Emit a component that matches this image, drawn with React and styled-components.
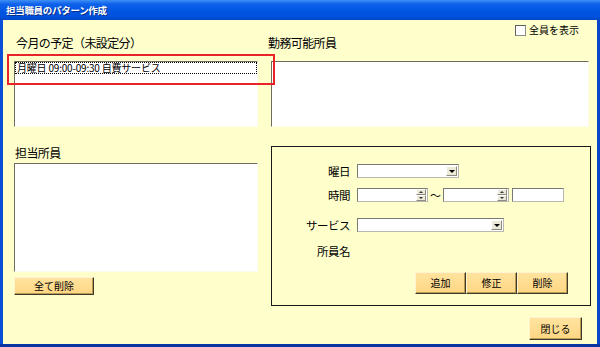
import styled, { createGlobalStyle } from 'styled-components';

const GlobalStyle = createGlobalStyle`
  html, body {
    margin: 0;
    padding: 0;
    background: #ffffff;
  }
  body {
    font-family: "Noto Sans CJK JP", "Liberation Sans", sans-serif;
    color: #000;
  }
`;

const Window = styled.div`
  width: 600px;
  height: 347px;
  box-sizing: border-box;
  display: flex;
  flex-direction: column;
  background: linear-gradient(to right, #0a4fd8, #0a55e6 50%, #0848c8);
  border-bottom: 3px solid #0a35a0;
`;

const TitleBar = styled.div`
  height: 20px;
  flex: none;
  display: flex;
  align-items: center;
  padding-left: 6px;
  background: linear-gradient(to bottom, #3d8ff6 0%, #0f62ea 20%, #0055e3 55%, #0050dc 85%, #0043c6 100%);
  color: #fff;
  font-size: 9.5px;
  font-weight: bold;
  letter-spacing: -0.3px;
  text-shadow: 1px 1px 0 #0a2f86;
`;

const Body = styled.div`
  flex: 1;
  margin: 0 3px;
  background: #ffffcc;
  padding: 0 6px 0 11px;
  display: flex;
  flex-direction: column;
`;

const CheckRow = styled.div`
  height: 12px;
  margin-top: 4px;
  display: flex;
  justify-content: flex-end;
  align-items: center;
  gap: 3px;
  padding-right: 12px;
  font-size: 10px;
  line-height: 12px;
`;

const CheckBox = styled.span`
  width: 9px;
  height: 9px;
  background: #fff;
  border: 1px solid #8a8a8a;
  border-top-color: #5f5f5f;
  border-left-color: #5f5f5f;
`;

const Columns = styled.div`
  display: grid;
  grid-template-columns: 244px 320px;
  column-gap: 13px;
  margin-top: ${(p) => p.$top || 0}px;
`;

const Column = styled.div`
  display: flex;
  flex-direction: column;
  align-items: flex-start;
`;

const Label = styled.div`
  font-size: 12px;
  line-height: 14px;
  height: ${(p) => p.$h}px;
  margin-left: ${(p) => p.$shift || 0}px;
  letter-spacing: -0.6px;
  white-space: nowrap;
`;

const ListBox = styled.div`
  width: ${(p) => p.$w}px;
  height: ${(p) => p.$h}px;
  box-sizing: border-box;
  background: #fff;
  border: 1px solid #fbfbf0;
  border-top-color: #6f6d60;
  border-left-color: #6f6d60;
`;

const ListItem = styled.div`
  height: 12px;
  box-sizing: border-box;
  border: 1px dotted #000;
  font-size: 10px;
  line-height: 10px;
  padding-left: 1px;
  white-space: nowrap;
  letter-spacing: -0.2px;
`;

const Highlight = styled.div`
  position: relative;
`;

const RedFrame = styled.div`
  position: absolute;
  left: -7px;
  top: -7px;
  width: 268px;
  height: 31px;
  box-sizing: border-box;
  border: 2px solid #e8242a;
  pointer-events: none;
`;

const Button = styled.button`
  width: ${(p) => p.$w}px;
  height: ${(p) => p.$h}px;
  margin-top: ${(p) => p.$top || 0}px;
  padding: 0;
  box-sizing: border-box;
  font-family: inherit;
  font-size: 10px;
  line-height: 10px;
  color: #000;
  background: linear-gradient(to bottom, #ffe39e, #ffd683);
  border: 1px solid #3e3a2a;
  border-top-color: #fff4cf;
  border-left-color: #fff4cf;
  box-shadow: inset -1px -1px 0 #b89a55;
`;

const GroupBox = styled.div`
  width: 320px;
  height: 160px;
  box-sizing: border-box;
  border: 1px solid #1a1a1a;
  display: flex;
  flex-direction: column;
  padding-top: 17px;
`;

const FormRow = styled.div`
  display: grid;
  grid-template-columns: 78px auto;
  column-gap: 7px;
  align-items: center;
  height: 14px;
  margin-top: ${(p) => p.$top || 0}px;
`;

const FormLabel = styled.div`
  text-align: right;
  font-size: 11.5px;
  line-height: 14px;
  letter-spacing: -0.5px;
  white-space: nowrap;
`;

const Fields = styled.div`
  display: flex;
  align-items: center;
  height: 14px;
`;

const Field = styled.div`
  width: ${(p) => p.$w}px;
  height: 14px;
  margin-left: ${(p) => p.$gap || 0}px;
  box-sizing: border-box;
  background: #fff;
  border: 1px solid #b8b8b0;
  border-top-color: #7a7a72;
  border-left-color: #7a7a72;
  display: flex;
  justify-content: flex-end;
  align-items: stretch;
`;

const DropArrow = styled.span`
  width: 11px;
  margin: 1px;
  background: #ece9d8;
  border: 1px solid #fff;
  border-right-color: #8d8b80;
  border-bottom-color: #8d8b80;
  box-sizing: border-box;
  display: flex;
  align-items: center;
  justify-content: center;
  &::after {
    content: '';
    border-left: 3px solid transparent;
    border-right: 3px solid transparent;
    border-top: 3px solid #000;
  }
`;

const Spinner = styled.span`
  width: 10px;
  margin: 0 1px 0 0;
  display: flex;
  flex-direction: column;
`;

const SpinHalf = styled.span`
  flex: 1;
  background: #ece9d8;
  border: 1px solid #fff;
  border-right-color: #8d8b80;
  border-bottom-color: #8d8b80;
  display: flex;
  align-items: center;
  justify-content: center;
  &::after {
    content: '';
    border-left: 2px solid transparent;
    border-right: 2px solid transparent;
    ${(p) => (p.$up ? 'border-bottom: 2px solid #333;' : 'border-top: 2px solid #333;')}
  }
`;

const Tilde = styled.span`
  width: 15px;
  text-align: center;
  font-size: 11px;
  line-height: 14px;
`;

const ButtonRow = styled.div`
  display: flex;
  justify-content: flex-end;
  padding-right: 22px;
  margin-top: 14px;
`;

const Footer = styled.div`
  display: flex;
  justify-content: flex-end;
  padding-right: 9px;
`;

function Select({ w }) {
  return (
    <Field $w={w}>
      <DropArrow />
    </Field>
  );
}

function SpinInput({ w, gap }) {
  return (
    <Field $w={w} $gap={gap}>
      <Spinner>
        <SpinHalf $up />
        <SpinHalf />
      </Spinner>
    </Field>
  );
}

export default function App() {
  return (
    <>
      <GlobalStyle />
      <Window>
        <TitleBar>担当職員のパターン作成</TitleBar>
        <Body>
          <CheckRow>
            <CheckBox />
            <span>全員を表示</span>
          </CheckRow>

          <Columns>
            <Column>
              <Label $h={25} $shift={2}>今月の予定（未設定分）</Label>
              <Highlight>
                <ListBox $w={244} $h={66}>
                  <ListItem>月曜日 09:00-09:30 自費サービス</ListItem>
                </ListBox>
                <RedFrame />
              </Highlight>
            </Column>
            <Column>
              <Label $h={25} $shift={-3}>勤務可能所員</Label>
              <ListBox $w={318} $h={66} />
            </Column>
          </Columns>

          <Columns $top={19}>
            <Column>
              <Label $h={17} $shift={1}>担当所員</Label>
              <ListBox $w={244} $h={109} />
              <Button $w={80} $h={18} $top={5}>全て削除</Button>
            </Column>
            <GroupBox>
              <FormRow>
                <FormLabel>曜日</FormLabel>
                <Fields>
                  <Select w={102} />
                </Fields>
              </FormRow>
              <FormRow $top={10}>
                <FormLabel>時間</FormLabel>
                <Fields>
                  <SpinInput w={71} />
                  <Tilde>～</Tilde>
                  <SpinInput w={66} />
                  <Field $w={52} $gap={3} />
                </Fields>
              </FormRow>
              <FormRow $top={16}>
                <FormLabel>サービス</FormLabel>
                <Fields>
                  <Select w={147} />
                </Fields>
              </FormRow>
              <FormRow $top={12}>
                <FormLabel>所員名</FormLabel>
                <Fields />
              </FormRow>
              <ButtonRow>
                <Button $w={51} $h={22}>追加</Button>
                <Button $w={51} $h={22}>修正</Button>
                <Button $w={51} $h={22}>削除</Button>
              </ButtonRow>
            </GroupBox>
          </Columns>

          <Footer>
            <Button $w={53} $h={23} $top={11}>閉じる</Button>
          </Footer>
        </Body>
      </Window>
    </>
  );
}
